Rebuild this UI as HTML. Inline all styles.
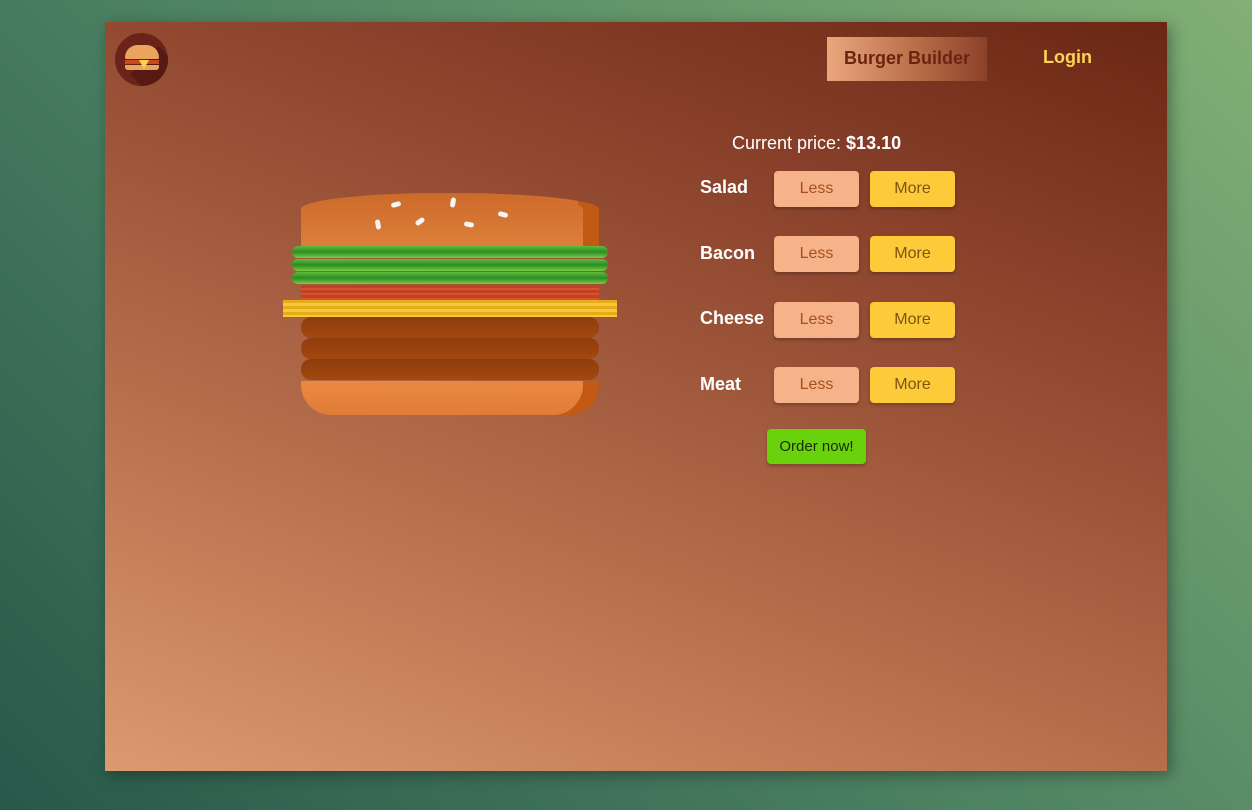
<!DOCTYPE html>
<html><head><style>
body{margin:0;width:1252px;height:810px;overflow:hidden;background:linear-gradient(45deg,#28584a 0%,#4f8463 50%,#82b075 100%);font-family:"Liberation Sans",sans-serif;position:relative}
.card{position:absolute;left:105px;top:22px;width:1062px;height:749px;background:linear-gradient(200deg,#6a2713 0%,#88402a 25%,#a35c3e 50%,#c07a55 75%,#dc9a70 100%);box-shadow:4px 4px 14px rgba(0,0,0,.35)}
.abs{position:absolute}
.btn{position:absolute;width:85px;height:36px;border-radius:4px;font-size:16px;text-align:center;line-height:36px;box-shadow:0 2px 3px rgba(0,0,0,.25)}
.less{background:#f6b38a;color:#a4511f}
.more{background:#fdcb3a;color:#7a5512}
.lbl{position:absolute;color:#fff;font-weight:bold;font-size:18px}
.sal{position:absolute;left:187px;width:316px;height:12px;border-radius:7px;background:linear-gradient(#5ebb3d,#2c8c22 50%,#7acb46)}
.meat{position:absolute;left:196px;width:298px;height:21px;border-radius:10px;background:linear-gradient(#8e3c0d,#a4480f)}
.seed{position:absolute;width:10px;height:5px;background:#f5f5f5;border-radius:3px}
</style></head><body>
<div class="card">
 <div class="abs" style="left:10px;top:11px;width:53px;height:53px;border-radius:50%;background:#6b2219;overflow:hidden">
  <div class="abs" style="left:22px;top:25px;width:50px;height:40px;background:#561a12;transform:rotate(45deg)"></div>
 </div>
 <div class="abs" style="left:20px;top:23px;width:34px;height:14px;border-radius:17px 17px 2px 2px;background:#e9a45d"></div>
 <div class="abs" style="left:20px;top:38px;width:34px;height:4px;background:#c84a20"></div>
 <div class="abs" style="left:20px;top:43px;width:34px;height:5px;border-radius:0 0 3px 3px;background:#e9a45d"></div>
 <div class="abs" style="left:34px;top:38px;width:0;height:0;border-left:5px solid transparent;border-right:5px solid transparent;border-top:9px solid #fcd34a"></div>
</div>
<div class="abs" style="left:827px;top:37px;width:160px;height:44px;background:linear-gradient(90deg,#eaa67c,#b46a45 60%,#8a4129);color:#6a2512;font-weight:bold;font-size:18px;line-height:42px;text-align:center">Burger Builder</div>
<div class="abs" style="left:1043px;top:47px;color:#fdd35a;font-weight:bold;font-size:18px">Login</div>

<div class="abs" style="left:105px;top:22px">
 <div class="abs" style="left:196px;top:171px;width:298px;height:54px;border-radius:50% 50% 0 0/30% 30% 0 0;background:linear-gradient(90deg,#d66e2c 93%,#c25a13 93%)"></div>
 <div class="abs" style="left:196px;top:171px;width:282px;height:54px;border-radius:50% 50% 0 0/30% 30% 0 0;background:linear-gradient(#cc6a2a,#de7f3b)"></div>
 <div class="seed" style="left:286px;top:180px;transform:rotate(-15deg)"></div>
 <div class="seed" style="left:343px;top:178px;transform:rotate(-80deg)"></div>
 <div class="seed" style="left:393px;top:190px;transform:rotate(15deg)"></div>
 <div class="seed" style="left:268px;top:200px;transform:rotate(80deg)"></div>
 <div class="seed" style="left:310px;top:197px;transform:rotate(-35deg)"></div>
 <div class="seed" style="left:359px;top:200px;transform:rotate(10deg)"></div>
 <div class="sal" style="top:224px"></div>
 <div class="sal" style="top:237px"></div>
 <div class="sal" style="top:250px"></div>
 <div class="abs" style="left:196px;top:263px;width:298px;height:15px;background:repeating-linear-gradient(#c4411f 0 3px,#d65233 3px 5px)"></div>
 <div class="abs" style="left:178px;top:278px;width:334px;height:17px;background:repeating-linear-gradient(#e5ad1c 0 3px,#f5c937 3px 6px)"></div>
 <div class="meat" style="top:295px"></div>
 <div class="meat" style="top:316px"></div>
 <div class="meat" style="top:337px"></div>
 <div class="abs" style="left:196px;top:359px;width:298px;height:34px;border-radius:0 0 30px 30px;background:#c25a13"></div>
 <div class="abs" style="left:196px;top:359px;width:282px;height:34px;border-radius:0 0 30px 30px;background:linear-gradient(#ea8840,#e07c38)"></div>
</div>

<div class="abs" style="left:732px;top:133px;color:#fff;font-size:18px">Current price: <b>$13.10</b></div>
<div class="lbl" style="left:700px;top:177px">Salad</div>
<div class="lbl" style="left:700px;top:243px">Bacon</div>
<div class="lbl" style="left:700px;top:308px">Cheese</div>
<div class="lbl" style="left:700px;top:374px">Meat</div>
<div class="btn less" style="left:774px;top:171px">Less</div><div class="btn more" style="left:870px;top:171px">More</div>
<div class="btn less" style="left:774px;top:236px">Less</div><div class="btn more" style="left:870px;top:236px">More</div>
<div class="btn less" style="left:774px;top:302px">Less</div><div class="btn more" style="left:870px;top:302px">More</div>
<div class="btn less" style="left:774px;top:367px">Less</div><div class="btn more" style="left:870px;top:367px">More</div>
<div class="abs" style="left:767px;top:429px;width:99px;height:35px;background:#6ad10d;border-radius:4px;color:#1b2b05;font-size:15px;line-height:35px;text-align:center;box-shadow:0 2px 3px rgba(0,0,0,.25)">Order now!</div>
</body></html>
